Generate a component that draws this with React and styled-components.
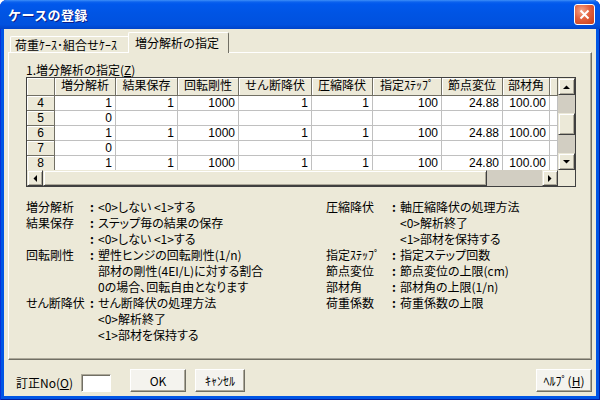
import React from "react";
import styled, { createGlobalStyle } from "styled-components";

const GlobalStyle = createGlobalStyle`
  html, body {
    margin: 0;
    padding: 0;
    background: #fff;
  }
  body {
    width: 600px;
    height: 400px;
    overflow: hidden;
    font-family: "Noto Sans CJK JP", "Liberation Sans", sans-serif;
    font-size: 12px;
    color: #000;
  }
`;

const Window = styled.div`
  width: 600px;
  height: 400px;
  box-sizing: border-box;
  display: flex;
  flex-direction: column;
  background: #0055e5;
  border-radius: 7px 7px 0 0;
  overflow: hidden;
  box-shadow: inset 1px 0 0 #0831d9, inset -1px 0 0 #001ea0, inset 0 -1px 0 #001ea0;
`;

const TitleBar = styled.div`
  height: 29px;
  flex: none;
  display: flex;
  align-items: center;
  justify-content: space-between;
  padding: 0 5px 0 8px;
  background: linear-gradient(
    #3d8ff8 0,
    #0b62ee 2px,
    #0058ec 4px,
    #0054e3 50%,
    #0051df 85%,
    #0043c9 100%
  );
`;

const Title = styled.span`
  color: #fff;
  font-weight: bold;
  font-size: 13px;
  letter-spacing: 0.4px;
  text-shadow: 1px 1px 0 #0a1e8a;
`;

const CloseButton = styled.div`
  width: 21px;
  height: 21px;
  box-sizing: border-box;
  border: 1px solid #fff;
  border-radius: 3px;
  background: radial-gradient(circle at 35% 30%, #f4a58a 0, #e2613f 45%, #c63d17 100%);
  display: flex;
  align-items: center;
  justify-content: center;
`;

const Client = styled.div`
  flex: 1;
  min-height: 0;
  margin: 0 4px 4px;
  background: #ece9d8;
  display: flex;
  flex-direction: column;
`;

const TabStrip = styled.div`
  height: 23px;
  box-sizing: border-box;
  flex: none;
  display: flex;
  align-items: flex-end;
  padding: 2px 0 0 6px;
  position: relative;
  z-index: 1;
`;

const Tab = styled.div`
  box-sizing: border-box;
  width: ${(p) => p.$w}px;
  height: ${(p) => (p.$active ? 21 : 16)}px;
  margin: ${(p) => (p.$active ? "0 0 -1px -2px" : "0")};
  padding: 0 0 0 ${(p) => (p.$active ? 6 : 4)}px;
  background: #ece9d8;
  border: 1px solid;
  border-color: #fff #716f64 transparent #fff;
  border-bottom: none;
  border-radius: 2px 2px 0 0;
  display: flex;
  align-items: center;
  white-space: nowrap;
  font-size: 12px;
  line-height: 14px;
`;

const Panel = styled.div`
  flex: 1;
  min-height: 0;
  margin: 0 4px;
  box-sizing: border-box;
  border: 1px solid;
  border-color: #fff #716f64 #716f64 #fff;
  box-shadow: inset -1px -1px 0 #aca899;
  padding: 10px 15px 0 17px;
  display: flex;
  flex-direction: column;
`;

const SectionLabel = styled.div`
  height: 14px;
  line-height: 14px;
  font-size: 12px;
  white-space: nowrap;
`;

const GridFrame = styled.div`
  width: 550px;
  height: 110px;
  box-sizing: border-box;
  border: 1px solid #404040;
  display: grid;
  grid-template-columns: 531px 17px;
  grid-template-rows: 92px 16px;
  background: #fff;
`;

const CellArea = styled.div`
  overflow: hidden;
`;

const GridRow = styled.div`
  display: grid;
  grid-template-columns: 28px 61px 62px 61px 73px 61px 69px 61px 47px 8px;
  height: ${(p) => p.$h}px;
`;

const Cell = styled.div`
  box-sizing: border-box;
  overflow: hidden;
  white-space: nowrap;
  font-family: "Liberation Sans", "Noto Sans CJK JP", sans-serif;
  font-size: 12px;
  line-height: 13px;
  display: flex;
  align-items: center;
  justify-content: ${(p) => (p.$head ? "center" : "flex-end")};
  padding: 0 ${(p) => (p.$head ? 0 : 3)}px;
  background: ${(p) => (p.$head ? "#ece9d8" : "#fff")};
  border-right: 1px solid ${(p) => (p.$head ? "#716f64" : "#c0c0c0")};
  border-bottom: 1px solid ${(p) => (p.$head ? "#716f64" : "#c0c0c0")};
  box-shadow: ${(p) => (p.$head ? "inset 1px 1px 0 #fff" : "none")};
`;

const VScroll = styled.div`
  display: flex;
  flex-direction: column;
  background: #d2cec2;
`;

const HScroll = styled.div`
  display: flex;
  background: #d2cec2;
`;

const ScrollButton = styled.div`
  box-sizing: border-box;
  flex: none;
  width: ${(p) => p.$w}px;
  height: ${(p) => p.$h}px;
  background: #ece9d8;
  border: 1px solid;
  border-color: #ece9d8 #404040 #404040 #ece9d8;
  box-shadow: inset 1px 1px 0 #fff, inset -1px -1px 0 #aca899;
  display: flex;
  align-items: center;
  justify-content: center;
`;

const Corner = styled.div`
  background: #ece9d8;
`;

const Gap = styled.div`
  flex: ${(p) => (p.$size ? "none" : 1)};
  ${(p) => (p.$vertical ? "height" : "width")}: ${(p) => (p.$size ? `${p.$size}px` : "auto")};
`;

const Description = styled.div`
  margin-top: 12px;
  display: grid;
  grid-template-columns: 300px 1fr;
  font-feature-settings: "palt";
`;

const DefList = styled.div`
  display: grid;
  grid-template-columns: ${(p) => p.$label}px 9px 1fr;
  grid-auto-rows: 16px;
  line-height: 16px;
  white-space: nowrap;
`;

const Colon = styled.span`
  font-weight: bold;
  padding-left: 1px;
`;

const BottomRow = styled.div`
  height: 36px;
  flex: none;
  box-sizing: border-box;
  display: flex;
  align-items: flex-end;
  padding: 0 4px 4px 12px;
`;

const FieldLabel = styled.span`
  height: 18px;
  line-height: 18px;
  font-size: 12px;
  white-space: nowrap;
`;

const NumberInput = styled.div`
  width: 30px;
  height: 18px;
  box-sizing: border-box;
  margin-left: 8px;
  background: #fff;
  border: 1px solid;
  border-color: #aca899 #fff #fff #aca899;
  box-shadow: inset 1px 1px 0 #716f64;
`;

const Button = styled.div`
  width: ${(p) => p.$w}px;
  height: 23px;
  box-sizing: border-box;
  margin-left: ${(p) => (p.$push ? "auto" : `${p.$gap}px`)};
  background: #f4f3ee;
  border: 1px solid;
  border-color: #fff #716f64 #716f64 #fff;
  box-shadow: inset -1px -1px 0 #aca899;
  display: flex;
  align-items: center;
  justify-content: center;
  font-size: 12px;
  line-height: 14px;
  white-space: nowrap;
`;

const Arrow = ({ dir }) => {
  const pts = {
    up: "0,4 7,4 3.5,0.5",
    down: "0,0 7,0 3.5,3.5",
    left: "4,0 4,7 0.5,3.5",
    right: "0,0 0,7 3.5,3.5",
  }[dir];
  const vertical = dir === "up" || dir === "down";
  return (
    <svg width={vertical ? 7 : 4} height={vertical ? 4 : 7}>
      <polygon points={pts} fill="#000" />
    </svg>
  );
};

const headers = ["", "増分解析", "結果保存", "回転剛性", "せん断降伏", "圧縮降伏", "指定ｽﾃｯﾌﾟ", "節点変位", "部材角", ""];

const full = ["1", "1", "1000", "1", "1", "100"];
const rows = [
  ["4", ...full, "24.88", "100.00", ""],
  ["5", "0", "", "", "", "", "", "", "", ""],
  ["6", ...full, "24.88", "100.00", ""],
  ["7", "0", "", "", "", "", "", "", "", ""],
  ["8", ...full, "24.80", "100.00", ""],
];

const leftDefs = [
  ["増分解析", true, "<0>しない <1>する"],
  ["結果保存", true, "ステップ毎の結果の保存"],
  ["", true, "<0>しない <1>する"],
  ["回転剛性", true, "塑性ヒンジの回転剛性(1/n)"],
  ["", false, "部材の剛性(4EI/L)に対する割合"],
  ["", false, "0の場合、回転自由となります"],
  ["せん断降伏", true, "せん断降伏の処理方法"],
  ["", false, "<0>解析終了"],
  ["", false, "<1>部材を保持する"],
];

const rightDefs = [
  ["圧縮降伏", true, "軸圧縮降伏の処理方法"],
  ["", false, "<0>解析終了"],
  ["", false, "<1>部材を保持する"],
  ["指定ｽﾃｯﾌﾟ", true, "指定ステップ回数"],
  ["節点変位", true, "節点変位の上限(cm)"],
  ["部材角", true, "部材角の上限(1/n)"],
  ["荷重係数", true, "荷重係数の上限"],
];

function Defs({ items, label }) {
  return (
    <DefList $label={label}>
      {items.map(([term, colon, text], i) => (
        <React.Fragment key={i}>
          <span>{term}</span>
          <Colon>{colon ? ":" : ""}</Colon>
          <span>{text}</span>
        </React.Fragment>
      ))}
    </DefList>
  );
}

export default function App() {
  return (
    <>
      <GlobalStyle />
      <Window>
        <TitleBar>
          <Title>ケースの登録</Title>
          <CloseButton>
            <svg width="11" height="11" viewBox="0 0 11 11">
              <path d="M1.5 1.5 L9.5 9.5 M9.5 1.5 L1.5 9.5" stroke="#fff" strokeWidth="2" />
            </svg>
          </CloseButton>
        </TitleBar>
        <Client>
          <TabStrip>
            <Tab $w={120}>荷重ｹｰｽ･組合せｹｰｽ</Tab>
            <Tab $w={101} $active>
              増分解析の指定
            </Tab>
          </TabStrip>
          <Panel>
            <SectionLabel>
              1.増分解析の指定(<u>Z</u>)
            </SectionLabel>
            <GridFrame>
              <CellArea>
                <GridRow $h={18}>
                  {headers.map((h, i) => (
                    <Cell key={i} $head>
                      {h}
                    </Cell>
                  ))}
                </GridRow>
                {rows.map((r) => (
                  <GridRow key={r[0]} $h={15}>
                    {r.map((v, i) => (
                      <Cell key={i} $head={i === 0}>
                        {v}
                      </Cell>
                    ))}
                  </GridRow>
                ))}
              </CellArea>
              <VScroll>
                <ScrollButton $w={17} $h={17}>
                  <Arrow dir="up" />
                </ScrollButton>
                <Gap $vertical $size={18} />
                <ScrollButton $w={17} $h={22} />
                <Gap $vertical />
                <ScrollButton $w={17} $h={17}>
                  <Arrow dir="down" />
                </ScrollButton>
              </VScroll>
              <HScroll>
                <ScrollButton $w={16} $h={16}>
                  <Arrow dir="left" />
                </ScrollButton>
                <ScrollButton $w={444} $h={16} />
                <Gap />
                <ScrollButton $w={16} $h={16}>
                  <Arrow dir="right" />
                </ScrollButton>
              </HScroll>
              <Corner />
            </GridFrame>
            <Description>
              <Defs items={leftDefs} label={63} />
              <Defs items={rightDefs} label={65} />
            </Description>
          </Panel>
          <BottomRow>
            <FieldLabel>
              訂正No(<u>O</u>)
            </FieldLabel>
            <NumberInput />
            <Button $w={56} $gap={19}>
              OK
            </Button>
            <Button $w={50} $gap={9}>
              ｷｬﾝｾﾙ
            </Button>
            <Button $w={56} $push>
              ﾍﾙﾌﾟ(<u>H</u>)
            </Button>
          </BottomRow>
        </Client>
      </Window>
    </>
  );
}
